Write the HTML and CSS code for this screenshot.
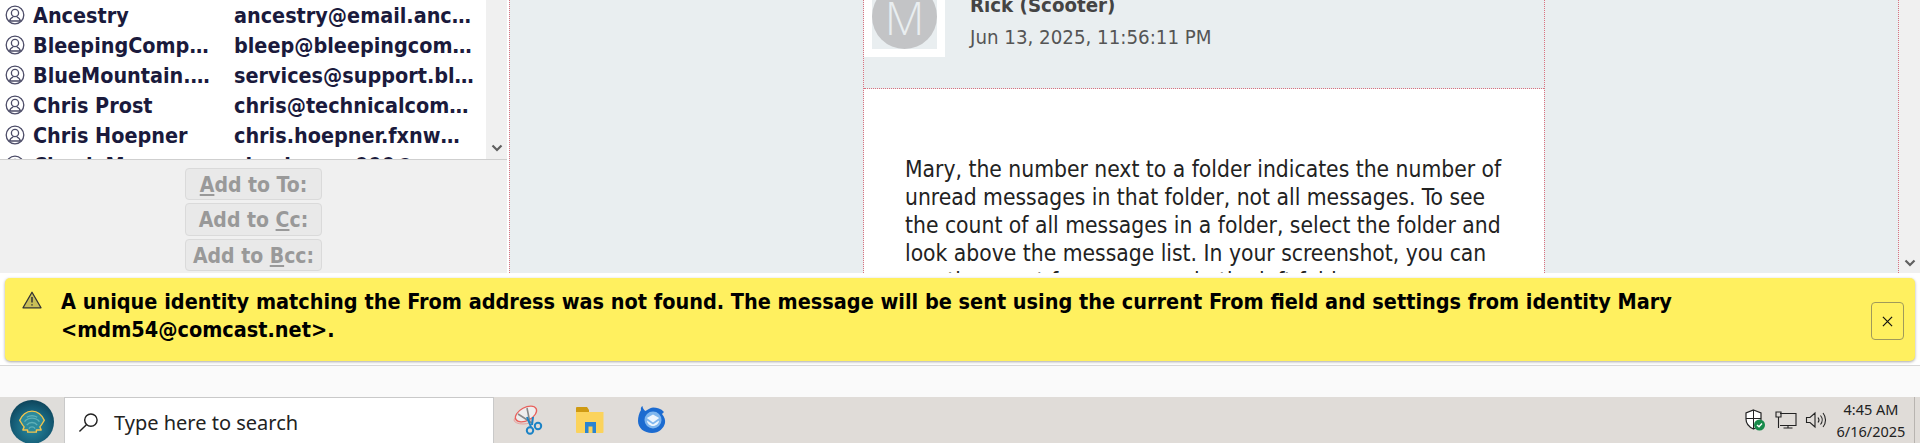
FILE: index.html
```html
<!DOCTYPE html>
<html lang="en">
<head>
<meta charset="utf-8">
<title>Write: Mary</title>
<link rel="stylesheet" href="styles.css">
</head>
<body>
<main class="compose">
  <aside class="contacts">
    <div class="list-wrap">
      <ul class="list">
        <li class="row"><svg class="cicon" viewBox="0 0 20 20"><circle cx="10" cy="10" r="8.8"/><circle cx="10" cy="8" r="3.6"/><path d="M4.6 16.2c.4-2.800 2-3.700 3.600-4.400M15.400 16.200c-.4-2.800-2-3.700-3.600-4.400M5 16h10"/></svg><span class="name">Ancestry</span><span class="mail">ancestry@email.anc…</span></li>
        <li class="row"><svg class="cicon" viewBox="0 0 20 20"><circle cx="10" cy="10" r="8.8"/><circle cx="10" cy="8" r="3.6"/><path d="M4.6 16.2c.4-2.800 2-3.700 3.600-4.400M15.400 16.200c-.4-2.800-2-3.700-3.600-4.400M5 16h10"/></svg><span class="name">BleepingComp…</span><span class="mail">bleep@bleepingcom…</span></li>
        <li class="row"><svg class="cicon" viewBox="0 0 20 20"><circle cx="10" cy="10" r="8.8"/><circle cx="10" cy="8" r="3.6"/><path d="M4.6 16.2c.4-2.800 2-3.700 3.600-4.400M15.400 16.200c-.4-2.800-2-3.700-3.600-4.400M5 16h10"/></svg><span class="name">BlueMountain.…</span><span class="mail">services@support.bl…</span></li>
        <li class="row"><svg class="cicon" viewBox="0 0 20 20"><circle cx="10" cy="10" r="8.8"/><circle cx="10" cy="8" r="3.6"/><path d="M4.6 16.2c.4-2.800 2-3.700 3.600-4.400M15.400 16.200c-.4-2.800-2-3.700-3.600-4.400M5 16h10"/></svg><span class="name">Chris Prost</span><span class="mail">chris@technicalcom…</span></li>
        <li class="row"><svg class="cicon" viewBox="0 0 20 20"><circle cx="10" cy="10" r="8.8"/><circle cx="10" cy="8" r="3.6"/><path d="M4.6 16.2c.4-2.800 2-3.700 3.600-4.400M15.400 16.200c-.4-2.800-2-3.700-3.600-4.400M5 16h10"/></svg><span class="name">Chris Hoepner</span><span class="mail">chris.hoepner.fxnw…</span></li>
        <li class="row"><svg class="cicon" viewBox="0 0 20 20"><circle cx="10" cy="10" r="8.8"/><circle cx="10" cy="8" r="3.6"/><path d="M4.6 16.2c.4-2.800 2-3.700 3.600-4.400M15.400 16.200c-.4-2.800-2-3.700-3.600-4.400M5 16h10"/></svg><span class="name">Chuck Mayo</span><span class="mail">chuckmayo999@…</span></li>
      </ul>
      <div class="sbar"><svg class="chev" viewBox="0 0 12 8"><path d="M1.5 1.5 6 6l4.500-4.500"/></svg></div>
    </div>
    <div class="actions">
      <button class="add" disabled><u>A</u>dd to To:</button>
      <button class="add" disabled>Add to <u>C</u>c:</button>
      <button class="add" disabled>Add to <u>B</u>cc:</button>
    </div>
  </aside>
  <section class="thread">
    <article class="card">
      <header class="head">
        <div class="avatar-box"><div class="avatar-in"><div class="avatar">M</div></div></div>
        <div class="meta">
          <div class="who">Rick (Scooter)</div>
          <div class="when">Jun 13, 2025, 11:56:11 PM</div>
        </div>
      </header>
      <div class="body">
        <p>Mary, the number next to a folder indicates the number of unread messages in that folder, not all messages. To see the count of all messages in a folder, select the folder and look above the message list. In your screenshot, you can see the count for messages in the left folder.</p>
      </div>
    </article>
  </section>
  <div class="sbar-main"><svg class="chev" viewBox="0 0 12 8"><path d="M1.5 1.5 6 6l4.500-4.500"/></svg></div>
</main>
<section class="notice-wrap">
  <div class="notice">
    <svg class="warn" viewBox="0 0 20 18"><path class="warn-fill" d="M10 1.200 19 16.800H1z"/><path class="warn-line" d="M10 6v5.500M10 13.300v1.200"/></svg>
    <p class="notice-text">A unique identity matching the From address was not found. The message will be sent using the current From field and settings from identity Mary &lt;mdm54@comcast.net&gt;.</p>
    <button class="close" aria-label="Close"><svg viewBox="0 0 12 12"><path d="M1 1l10 10M11 1 1 11"/></svg></button>
  </div>
</section>
<div class="status"></div>
<footer class="taskbar">
  <div class="start">
    <div class="orb"><svg viewBox="0 0 32 28"><path class="shell" d="M16 1C13 1 10 2 7.500 4 5 6 3 8.500 2 11.500c1.500 2.500 3 5.500 5 7.500l-1.500 3.500h5.500V25h10v-2.500h5.500L25 19c2-2 3.500-5 5-7.500-1-3-3-5.500-5.500-7.500C22 2 19 1 16 1z"/><path class="rays" d="M12.500 21a4 4 0 0 1 7 0M10 17a7.500 7.500 0 0 1 12 0M7.500 13a11 11 0 0 1 17 0M10 8a12 12 0 0 1 12 0"/></svg></div>
  </div>
  <div class="search">
    <svg class="lens" viewBox="0 0 22 22"><circle cx="13.500" cy="8.500" r="6.500"/><path d="M8.800 13.300 1.500 20.500"/></svg>
    <span>Type here to search</span>
  </div>
  <div class="apps">
    <svg class="app" viewBox="0 0 30 30"><ellipse class="sn-b" cx="10" cy="15" rx="9" ry="4"/><ellipse class="sn-a" cx="13" cy="9" rx="11.500" ry="6.500" transform="rotate(-28 13 9)"/><path class="sn-c" d="M5 9l14 9M14 3l3 15"/><circle class="sn-d" cx="17" cy="25.500" r="3.200"/><circle class="sn-d" cx="25" cy="21" r="3.200"/><path class="sn-d" d="M14 12l4 10M20 12l-1 8"/></svg>
    <svg class="app" viewBox="0 0 30 30"><path class="fd-a" d="M1 3a1 1 0 0 1 1-1h10l2 3v4H1z"/><path class="fd-b" d="M1 7h27.500v20a1 1 0 0 1-1 1H2a1 1 0 0 1-1-1z"/><path class="fd-c" d="M10 28V17h11v11h-3.500v-6.500h-4V28z"/></svg>
    <svg class="app" viewBox="0 0 30 30"><path class="tb-a" d="M4 5C3.500 3.500 4 2 5.500 1c.2 2.500 1.500 4 3 5 2-1.500 4.500-3 7.500-3.500 4 0 8 1 11 4.500l-2 2c2.500 3 3.500 6 3 9-1 5-6 10-13 10C7 28 1 23 1 16c0-4 1-8 3-11z"/><circle class="tb-b" cx="16" cy="15" r="8.500"/><path class="tb-c" d="M9.800 13 16 9.500l6.200 3.500-6.200 4.500zM10 15.500l6 4 6-4c0 3-3 5.500-6 5.500s-6-2.500-6-5.500z"/></svg>
  </div>
  <div class="tray">
    <svg class="shield" viewBox="0 0 22 22"><path class="sh-a" d="M9.500 1 17 4v6c0 5-3 8-7.500 10C5 18 2 15 2 10V4z"/><path class="sh-b" d="M9.500 1v19M2 9.500h15"/><circle class="sh-c" cx="15.500" cy="16" r="5.500"/><path class="sh-d" d="M13 16l2 1.800 3-3.200"/></svg>
    <svg class="net" viewBox="0 0 22 18"><path d="M5 2.500h16v12H5M13 14.500V17M8.500 17h9M1 1h5v5H1zM2.800 1V.500M3.500 6v11"/></svg>
    <svg class="vol" viewBox="0 0 22 18"><path d="M1.500 6.500h3.500L10 2v14l-5-4.500H1.500zM13 6.500a4 4 0 0 1 0 5M15.500 4.500a7 7 0 0 1 0 9M18 2a11 11 0 0 1 0 14"/></svg>
    <div class="clock"><span>4:45 AM</span><span>6/16/2025</span></div>
    <div class="show-desk"></div>
  </div>
</footer>
</body>
</html>
```
FILE: styles.css
```css
* { box-sizing: border-box; }
html, body { margin: 0; height: 443px; overflow: hidden; }
body { display: flex; flex-direction: column; background: #fff; font-family: "DejaVu Sans Condensed", "DejaVu Sans", sans-serif; }
p, ul { margin: 0; padding: 0; }
.compose { display: flex; height: 273px; overflow: hidden; flex: none; }
.contacts { width: 507px; flex: none; display: flex; flex-direction: column; background: #f0f0f0; }
.list-wrap { display: flex; height: 160px; border-bottom: 1px solid #cfcfcf; overflow: hidden; flex: none; }
.list { flex: 1; list-style: none; background: #fff; }
.row { height: 30px; display: flex; align-items: center; padding-left: 5px; font-weight: 700; font-size: 21.400px; color: #1a1a3c; white-space: nowrap; }
.cicon { width: 20px; height: 20px; flex: none; fill: none; stroke: #4c4c68; stroke-width: 1.300; margin-right: 8px; }
.name { width: 201px; flex: none; overflow: hidden; }
.mail { flex: none; }
.sbar { width: 21px; flex: none; background: #f0f0f0; display: flex; align-items: flex-end; justify-content: center; padding-bottom: 7px; }
.chev { width: 12px; height: 8px; fill: none; stroke: #606060; stroke-width: 2.200; }
.actions { display: flex; flex-direction: column; align-items: center; gap: 3px; padding-top: 8px; }
.add { width: 137px; height: 32.300px; padding: 2px 0 0; border: 1px solid #dadada; border-radius: 4px; background: #e9e9e9; color: #999; font: 700 21px "DejaVu Sans Condensed", "DejaVu Sans", sans-serif; white-space: nowrap; }
.thread { flex: 1; background: #e9eef0; border-left: 1px dotted #d9717f; margin-left: 2px; border-right: 1px dotted #d9717f; display: flex; justify-content: center; }
.card { width: 682px; flex: none; border-left: 1px dotted #d9717f; border-right: 1px dotted #d9717f; display: flex; flex-direction: column; }
.head { height: 89px; flex: none; display: flex; border-bottom: 1px dotted #d9717f; }
.avatar-box { width: 81px; height: 57px; background: #fff; padding: 0 8px 8px; flex: none; }
.avatar-in { width: 65px; height: 49px; background: #e9eef0; overflow: hidden; }
.avatar { width: 65px; height: 65px; margin-top: -16px; border-radius: 50%; background: #c3c4c6; color: #e9eef0; font-size: 46px; font-weight: 300; font-family: "Open Sans", sans-serif; display: flex; align-items: center; justify-content: center; }
.meta { padding-left: 25px; margin-top: -9px; }
.who { font-weight: 700; font-size: 20.300px; line-height: 28px; color: #444; white-space: nowrap; }
.when { font-size: 20.300px; line-height: 28px; margin-top: 4px; color: #555; white-space: nowrap; }
.body { flex: 1; background: #fff; padding: 66px 40px 0 41px; overflow: hidden; font-size: 22.650px; line-height: 28px; color: #222; }
.sbar-main { width: 21px; flex: none; background: #f0f0f0; display: flex; align-items: flex-end; justify-content: center; padding-bottom: 6px; }
.notice-wrap { height: 93px; flex: none; padding: 5px 5px 0; border-bottom: 1px solid #d8d8d8; }
.notice { height: 83px; background: #fff05f; border-radius: 5px; box-shadow: 0 1px 3px rgba(0,0,0,.35); display: flex; align-items: flex-start; padding-left: 17px; position: relative; }
.warn { width: 20px; height: 18px; flex: none; margin-top: 13px; }
.warn-fill { fill: #c9bf57; stroke: #333; stroke-width: 1.300; stroke-linejoin: round; }
.warn-line { fill: none; stroke: #333; stroke-width: 1.500; }
.notice-text { margin-left: 19px; margin-top: 10px; width: 1780px; font-size: 21.470px; font-weight: 700; line-height: 27.500px; color: #000; }
.close { position: absolute; right: 11px; top: 24px; width: 33px; height: 38px; padding: 0; background: transparent; border: 1px solid #a09a5a; border-radius: 4px; display: flex; align-items: center; justify-content: center; }
.close svg { width: 11px; height: 11px; fill: none; stroke: #111; stroke-width: 1.300; }
.status { height: 31px; flex: none; background: #fafafa; }
.taskbar { height: 46px; flex: none; display: flex; background: #e0dcd8; }
.start { width: 64px; flex: none; display: flex; align-items: center; justify-content: center; background: #dfddda; }
.orb { width: 44px; height: 44px; margin-top: 4px; border-radius: 50%; background: radial-gradient(circle at 50% 62%, #2a8ba0 0, #16607a 50%, #0c3d52 85%, #8fa9b2 94%, #b4c4ca 100%); display: flex; align-items: center; justify-content: center; }
.orb svg { width: 28px; height: 25px; }
.shell { fill: #2c8a9c; stroke: #f3c44c; stroke-width: 1.600; stroke-linejoin: round; }
.rays { fill: none; stroke: #5fb0b8; stroke-width: 1.500; }
.search { width: 430px; flex: none; display: flex; align-items: center; background: #fff; border-top: 1px solid #c9c9c9; border-left: 1px solid #c9c9c9; border-right: 1px solid #c9c9c9; padding: 3px 0 0 13px; font-family: "Noto Sans", sans-serif; font-size: 20px; color: #222; }
.lens { width: 21px; height: 21px; flex: none; margin-right: 15px; fill: none; stroke: #222; stroke-width: 1.500; }
.apps { display: flex; align-items: center; gap: 32px; padding-left: 19px; }
.app { width: 30px; height: 30px; flex: none; }
.sn-a { fill: #eee; stroke: #e8605c; stroke-width: 1.300; }
.sn-b { fill: none; stroke: #e8a09c; stroke-width: 1; }
.sn-c { fill: none; stroke: #888; stroke-width: 1.600; }
.sn-d { fill: none; stroke: #1b83c6; stroke-width: 2; }
.fd-a { fill: #cf9a12; }
.fd-b { fill: #fbd35c; }
.fd-c { fill: #2a84d2; }
.tb-a { fill: #1c6bd0; }
.tb-b { fill: #7fb6ee; }
.tb-c { fill: #eef5fd; }
.tray { margin-left: auto; display: flex; align-items: center; }
.shield { width: 22px; height: 22px; margin-right: 9px; }
.sh-a { fill: #fff; stroke: #222; stroke-width: 1.200; }
.sh-b { fill: none; stroke: #222; stroke-width: 1; }
.sh-c { fill: #178a4a; }
.sh-d { fill: none; stroke: #fff; stroke-width: 1.400; }
.net, .vol { width: 22px; height: 18px; fill: none; stroke: #222; stroke-width: 1.100; }
.net { margin-right: 8px; }
.vol { margin-right: 6px; }
.clock { width: 76px; display: flex; flex-direction: column; align-items: center; font-family: "Noto Sans", sans-serif; font-size: 14.500px; line-height: 22px; color: #222; }
.show-desk { width: 1px; height: 46px; background: #b8b4b0; margin: 0 5px 0 5px; }
```
